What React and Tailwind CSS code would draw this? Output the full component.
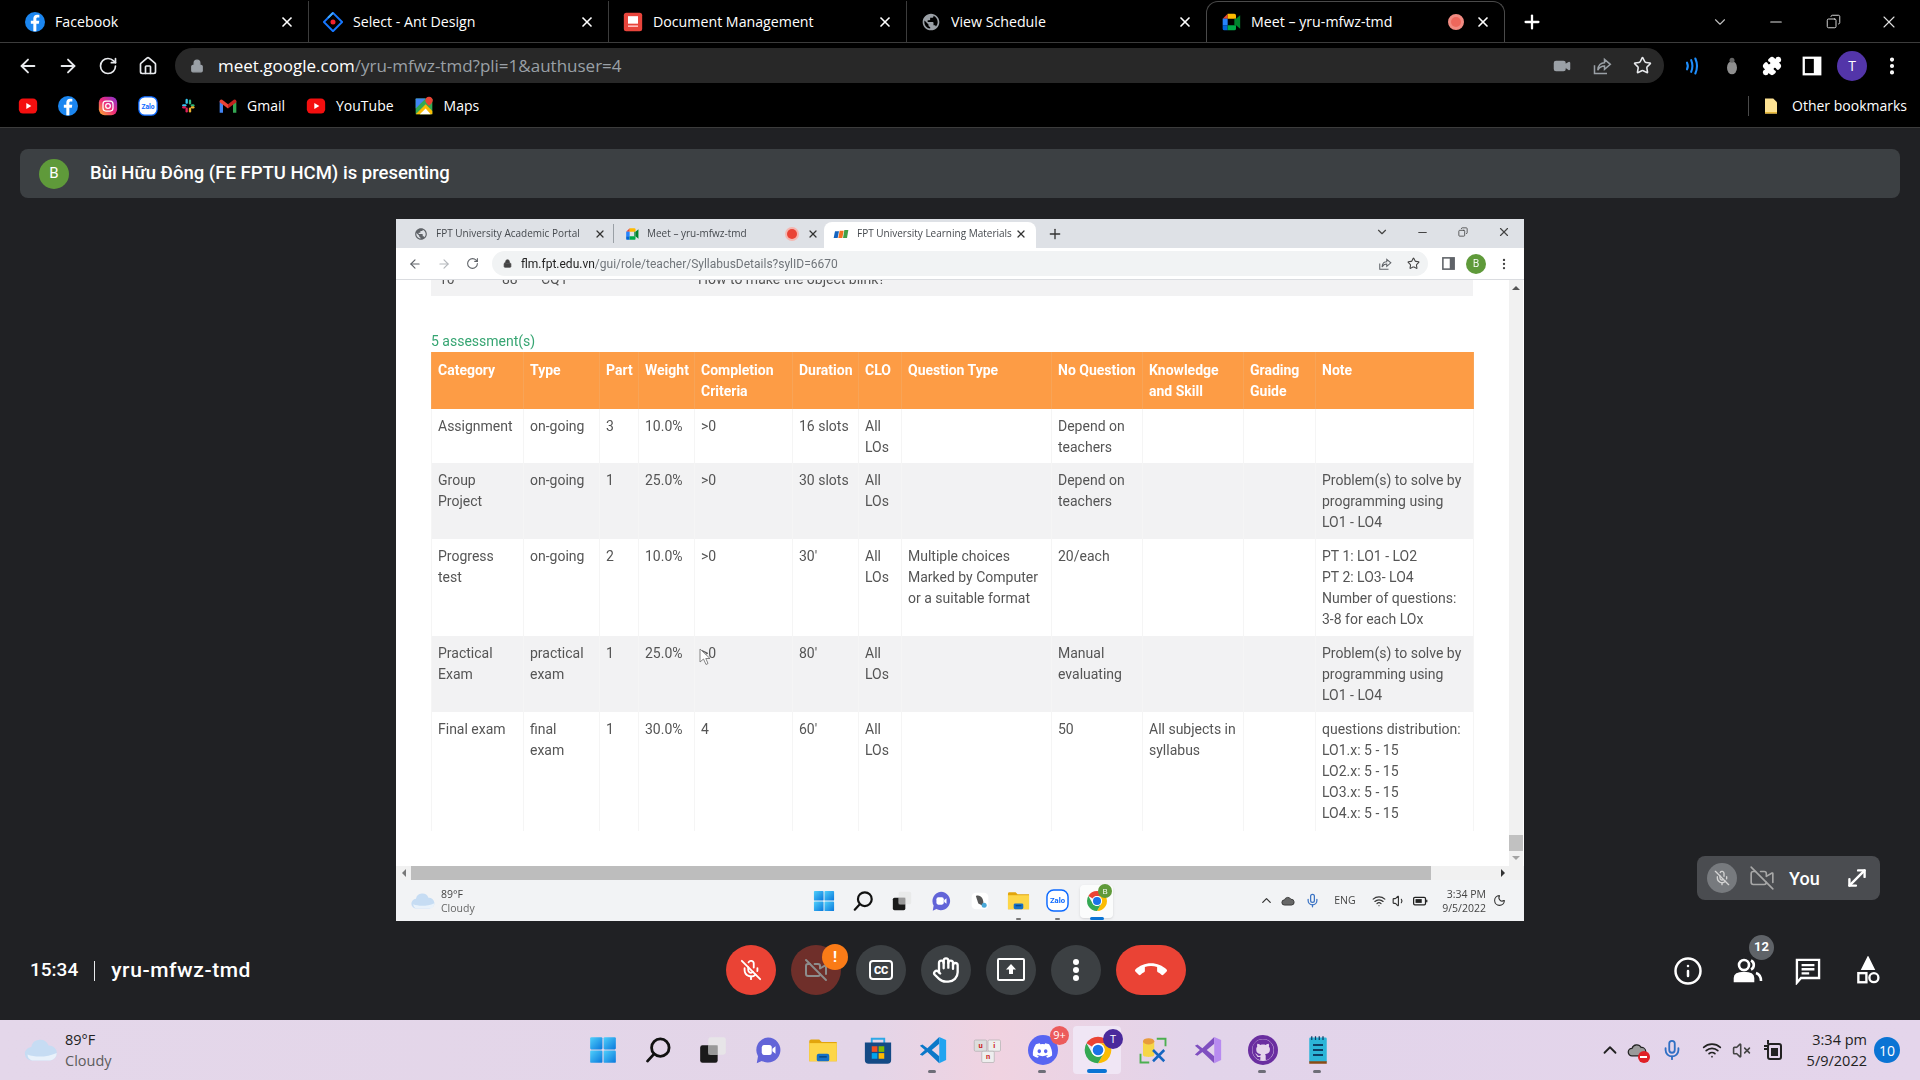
import React from 'react';
import {
  ArrowLeft, ArrowRight, RotateCw, House, Lock, Video, Star, Puzzle, X, Plus, ChevronDown, ChevronUp,
  Minus, Copy, MicOff, VideoOff, Hand, EllipsisVertical, Info, Mic, Wifi, VolumeX, Volume1, MoveDiagonal,
  Moon,
} from 'lucide-react';
import { FaDiscord, FaGithub } from 'react-icons/fa';

// --- logos and small drawings ---
const FbLogo = ({ size = 20 }) => (
  <svg width={size} height={size} viewBox="0 0 24 24">
    <circle cx="12" cy="12" r="12" fill="#1b86f0" />
    <path d="M13.6 23v-9h3l.5-3.5h-3.500V8.300c0-1 .4-1.700 1.800-1.700h1.800V3.500c-.4 0-1.400-.2-2.700-.2-2.700 0-4.500 1.600-4.500 4.600v2.600H7V14h3V23z" fill="#fff" />
  </svg>
);
const AntLogo = () => (
  <svg width="20" height="20" viewBox="0 0 24 24">
    <path d="M12 1 L23 12 L12 23 L1 12 Z" fill="none" stroke="#1677ff" strokeWidth="2.400" />
    <path d="M12 1 L6 7" stroke="#40a9ff" strokeWidth="2.400" />
    <circle cx="12" cy="12" r="3" fill="#f5222d" />
  </svg>
);
const DocLogo = () => (
  <svg width="20" height="20" viewBox="0 0 24 24">
    <rect x="1" y="1" width="22" height="22" rx="3" fill="#e8453c" />
    <rect x="6" y="5" width="12" height="9" fill="#fff" />
    <rect x="6" y="16" width="12" height="2" fill="#fbb" />
  </svg>
);
const GlobeFilled = ({ size = 20, color = '#9aa0a6' }) => (
  <svg width={size} height={size} viewBox="0 0 24 24" fill={color}>
    <path d="M12 2C6.480 2 2 6.480 2 12s4.480 10 10 10 10-4.480 10-10S17.520 2 12 2zm-1 17.930c-3.950-.49-7-3.850-7-7.930 0-.62.08-1.210.21-1.790L9 15v1c0 1.100.9 2 2 2v1.930zm6.900-2.540c-.26-.81-1-1.390-1.900-1.390h-1v-3c0-.55-.45-1-1-1H8v-2h2c.55 0 1-.45 1-1V7h2c1.100 0 2-.9 2-2v-.41c2.930 1.190 5 4.060 5 7.410 0 2.080-.8 3.970-2.100 5.390z" />
  </svg>
);
const MeetLogo = ({ size = 20 }) => (
  <svg width={size} height={size} viewBox="0 0 24 24">
    <path d="M2 8 L8 2 V8 Z" fill="#ea4335" />
    <path d="M2 8 H8 V16 H2 Z" fill="#2684fc" />
    <path d="M2 16 H8 V22 H4 A2 2 0 0 1 2 20 Z" fill="#0066da" />
    <path d="M8 2 H16 A2 2 0 0 1 18 4 V8 H8 Z" fill="#ffba00" />
    <path d="M8 16 H18 V20 A2 2 0 0 1 16 22 H8 Z" fill="#00ac47" />
    <path d="M18 8 L23 4 V20 L18 16 Z" fill="#00832d" />
    <path d="M16 8 H18 V16 H16 Z" fill="#00832d" />
  </svg>
);
const FptLogo = () => (
  <svg width="16" height="12" viewBox="0 0 24 16">
    <path d="M3 4 H9 L7 14 H1 Z" fill="#1565c0" />
    <path d="M10 3 H16 L14 14 H8 Z" fill="#f26f21" />
    <path d="M17 2 H23 L21 14 H15 Z" fill="#43a047" />
  </svg>
);
const YtLogo = () => (
  <svg width="20" height="20" viewBox="0 0 24 24">
    <rect x="1" y="3" width="22" height="18" rx="5" fill="#f40f0f" />
    <path d="M10 8.500 L16 12 L10 15.500 Z" fill="#fff" />
  </svg>
);
const InstaLogo = () => (
  <svg width="20" height="20" viewBox="0 0 24 24">
    <defs>
      <linearGradient id="insta" x1="0" y1="1" x2="1" y2="0">
        <stop offset="0" stopColor="#fdb32b" />
        <stop offset="0.5" stopColor="#ee2a7b" />
        <stop offset="1" stopColor="#8134d5" />
      </linearGradient>
    </defs>
    <rect x="1" y="1" width="22" height="22" rx="7" fill="url(#insta)" />
    <rect x="6" y="6" width="12" height="12" rx="3.500" fill="none" stroke="#fff" strokeWidth="1.500" />
    <circle cx="12" cy="12" r="2.800" fill="none" stroke="#fff" strokeWidth="1.500" />
  </svg>
);
const ZaloLogo = ({ size = 20 }) => (
  <svg width={size} height={size} viewBox="0 0 24 24">
    <rect x="1" y="1" width="22" height="22" rx="7" fill="#fff" stroke="#0a68ff" strokeWidth="1.500" />
    <text x="12" y="15" textAnchor="middle" fontSize="8" fontWeight="700" fill="#0a68ff" fontFamily="Roboto, sans-serif">Zalo</text>
  </svg>
);
const SlackLogo = () => (
  <svg width="16" height="18" viewBox="0 0 24 24" strokeWidth="3.500" strokeLinecap="round">
    <path d="M10 3 V7" stroke="#36c5f0" />
    <path d="M5 11 H8" stroke="#36c5f0" />
    <path d="M15 4 V8" stroke="#2eb67d" />
    <path d="M18 11 H20" stroke="#2eb67d" />
    <path d="M10 16 V20" stroke="#e01e5a" />
    <path d="M5 14 H7" stroke="#e01e5a" />
    <path d="M15 16 V20" stroke="#ecb22e" />
    <path d="M18 14 H20" stroke="#ecb22e" />
  </svg>
);
const GmailLogo = () => (
  <svg width="20" height="20" viewBox="0 0 24 24">
    <path d="M2 6 V20 H6 V10 Z" fill="#4285f4" />
    <path d="M22 6 V20 H18 V10 Z" fill="#34a853" />
    <path d="M2 6 A2 2 0 0 1 5 4.500 L12 10 L12 15 L2 7.500 Z" fill="#ea4335" />
    <path d="M22 6 A2 2 0 0 0 19 4.500 L12 10 L12 15 L22 7.500 Z" fill="#c5221f" />
  </svg>
);
const MapsLogo = () => (
  <svg width="20" height="20" viewBox="0 0 24 24">
    <rect x="2" y="3" width="20" height="19" rx="1" fill="#34a853" />
    <path d="M2 3 H14 L2 15 Z" fill="#4285f4" />
    <path d="M2 22 L14 10 L22 18 V22 Z" fill="#fbbc04" />
    <path d="M7 22 L14 15 L20 22 Z" fill="#fff" />
    <path d="M18 1 C15 1 13.500 3.500 13.500 5.500 C13.500 8 18 12 18 12 C18 12 22.500 8 22.500 5.500 C22.500 3.500 21 1 18 1 Z" fill="#ea4335" />
  </svg>
);
const ChromeLogo = ({ size = 24 }) => (
  <svg width={size} height={size} viewBox="0 0 24 24">
    <path d="M12 2 A10 10 0 0 1 20.660 7 H12 A5 5 0 0 0 7.670 9.500 L3.340 7 A10 10 0 0 1 12 2 Z" fill="#ea4335" />
    <path d="M20.660 7 A10 10 0 0 1 12 22 L16.330 14.500 A5 5 0 0 0 12 7 Z" fill="#fbbc04" />
    <path d="M3.340 7 L7.670 14.500 A5 5 0 0 0 16.330 14.500 L12 22 A10 10 0 0 1 3.340 7 Z" fill="#34a853" />
    <circle cx="12" cy="12" r="5" fill="#fff" />
    <circle cx="12" cy="12" r="4" fill="#1a73e8" />
  </svg>
);
const WinLogo = ({ size = 28 }) => (
  <svg width={size} height={size} viewBox="0 0 24 24">
    <defs>
      <linearGradient id="win" x1="0" y1="0" x2="1" y2="1">
        <stop offset="0" stopColor="#4fd0fb" />
        <stop offset="1" stopColor="#0a78dc" />
      </linearGradient>
    </defs>
    <rect x="1" y="1" width="10.500" height="10.500" rx="1" fill="url(#win)" />
    <rect x="12.500" y="1" width="10.500" height="10.500" rx="1" fill="url(#win)" />
    <rect x="1" y="12.500" width="10.500" height="10.500" rx="1" fill="url(#win)" />
    <rect x="12.500" y="12.500" width="10.500" height="10.500" rx="1" fill="url(#win)" />
  </svg>
);
const WinSearch = ({ size = 28 }) => (
  <svg width={size} height={size} viewBox="0 0 24 24" fill="none" stroke="#111" strokeWidth="2.400" strokeLinecap="round">
    <circle cx="14" cy="10" r="7.500" />
    <path d="M8.500 15.500 L3 21.500" />
  </svg>
);
const TaskView = ({ size = 28 }) => (
  <svg width={size} height={size} viewBox="0 0 24 24">
    <rect x="1" y="8" width="15" height="15" rx="2" fill="#1a1a1a" />
    <rect x="8" y="1" width="15" height="15" rx="2" fill="#e8e8e8" fillOpacity="0.85" />
    <rect x="8" y="8" width="8" height="8" fill="#999" />
  </svg>
);
const MeetChat = ({ size = 28 }) => (
  <svg width={size} height={size} viewBox="0 0 24 24">
    <path d="M12 2 A10 10 0 1 1 7 20.700 L3 22.500 L4 17 A10 10 0 0 1 12 2 Z" fill="#6264d8" />
    <rect x="7" y="8" width="8" height="8" rx="2" fill="#fff" />
    <path d="M15.500 11 L18 9 V15 L15.500 13 Z" fill="#fff" />
  </svg>
);
const FolderLogo = ({ size = 28 }) => (
  <svg width={size} height={size} viewBox="0 0 24 24">
    <path d="M1 5 A1.500 1.500 0 0 1 2.500 3.500 H9 L11 5.500 H23 V21 H1 Z" fill="#e2a50c" />
    <rect x="1" y="6.500" width="22" height="14.500" fill="#fdd648" />
    <rect x="7" y="15" width="10" height="6" rx="1.500" fill="#1570c6" />
    <rect x="9" y="17" width="6" height="1" fill="#063f73" />
  </svg>
);
const StoreLogo = ({ size = 28 }) => (
  <svg width={size} height={size} viewBox="0 0 24 24">
    <path d="M7 7 V3 H17 V7" fill="none" stroke="#2ea8e6" strokeWidth="1.500" />
    <path d="M1.500 6 H22.500 V20 A3 3 0 0 1 19.500 23 H4.500 A3 3 0 0 1 1.500 20 Z" fill="#144a85" />
    <rect x="7" y="9" width="4.500" height="4.500" fill="#f25022" />
    <rect x="12.500" y="9" width="4.500" height="4.500" fill="#7fba00" />
    <rect x="7" y="14.500" width="4.500" height="4.500" fill="#00a4ef" />
    <rect x="12.500" y="14.500" width="4.500" height="4.500" fill="#ffb900" />
  </svg>
);
const VsCodeLogo = ({ size = 30 }) => (
  <svg width={size} height={size} viewBox="0 0 24 24">
    <path d="M17 1.500 L7.500 10.500 3.500 7.500 1.500 8.500 5.500 12 1.500 15.500 3.500 16.500 7.500 13.500 17 22.500 V17 L11 12 L17 7 Z" fill="#0b78c9" />
    <path d="M17 1.500 L22.500 4 V20 L17 22.500 Z" fill="#20a4f0" />
  </svg>
);
const UniKeyLogo = ({ size = 30 }) => (
  <svg width={size} height={size} viewBox="0 0 24 24" fontSize="6" fontWeight="700" fontFamily="Roboto, sans-serif" textAnchor="middle">
    <rect x="1" y="4" width="10" height="9" rx="1" fill="#ddd" stroke="#aaa" strokeWidth="0.500" />
    <rect x="12" y="4" width="10" height="9" rx="1" fill="#eee" stroke="#aaa" strokeWidth="0.500" />
    <rect x="7" y="13" width="10" height="9" rx="1" fill="#eee" stroke="#aaa" strokeWidth="0.500" />
    <text x="6" y="10" fill="#c22">u</text>
    <text x="17" y="10" fill="#c22">i</text>
    <text x="12" y="19" fill="#c22">n</text>
  </svg>
);
const DiscordLogo = ({ size = 30 }) => (
  <span className="flex items-center justify-center rounded-full bg-[#5865f2]" style={{ width: size, height: size }}>
    <FaDiscord color="#fff" size={size * 0.7} />
  </span>
);
const SqlToolLogo = ({ size = 30 }) => (
  <svg width={size} height={size} viewBox="0 0 24 24">
    <path d="M15 3 H22 V9 M2 15 V22 H9" fill="none" stroke="#4caf50" strokeWidth="1.500" />
    <path d="M4 5 V16 C4 18 13 18 13 16 V5 Z" fill="#f6d648" />
    <ellipse cx="8.500" cy="5" rx="4.500" ry="2.500" fill="#e89b3c" />
    <path d="M12 12 L21 21 M21 12 L12 21" stroke="#1566c0" strokeWidth="2" />
  </svg>
);
const VsLogo = ({ size = 30 }) => (
  <svg width={size} height={size} viewBox="0 0 24 24">
    <path d="M17 1.500 L7.500 10.500 3.500 7.500 1.500 8.500 5.500 12 1.500 15.500 3.500 16.500 7.500 13.500 17 22.500 V17 L11 12 L17 7 Z" fill="#7f4fc0" />
    <path d="M17 1.500 L22.500 4 V20 L17 22.500 Z" fill="#b88bf0" />
  </svg>
);
const GithubLogo = ({ size = 30 }) => (
  <span className="flex items-center justify-center rounded-full bg-[#6a2ea0]" style={{ width: size, height: size }}>
    <span className="flex items-center justify-center rounded-full bg-[#e5d5ec]" style={{ width: size - 8, height: size - 8 }}>
      <FaGithub color="#6a2ea0" size={size - 8} />
    </span>
  </span>
);
const NotesLogo = ({ size = 30 }) => (
  <svg width={size} height={size} viewBox="0 0 24 24">
    <rect x="5" y="2" width="14" height="20" rx="1" fill="#2cb5d8" />
    <rect x="5" y="21" width="14" height="2" fill="#8a4b16" />
    <path d="M8 8 H16 M8 12 H16 M8 16 H16" stroke="#0d3f66" strokeWidth="1.500" />
    <path d="M7 1 V4 M10 1 V4 M13 1 V4 M16 1 V4" stroke="#0d3f66" strokeWidth="1" />
  </svg>
);
const ShareIcon = ({ size = 18, color }) => (
  <svg width={size} height={size} viewBox="0 0 24 24" fill="none" stroke={color} strokeWidth="1.800">
    <path d="M3 11 V21 H18" />
    <path d="M7 17 C7 11 11 8 15 8 V4 L22 10 L15 16 V12 C12 12 9 13 7 17 Z" />
  </svg>
);
const PanelIcon = ({ size = 20, side = '#fff', box = '#fff' }) => (
  <svg width={size} height={size} viewBox="0 0 24 24">
    <rect x="3" y="3" width="18" height="18" fill="none" stroke={box} strokeWidth="2.500" />
    <rect x="14" y="3" width="7" height="18" fill={side} />
  </svg>
);
const CloudIcon = ({ size = 32 }) => (
  <svg width={size} height={size} viewBox="0 0 24 24">
    <path d="M6 19 A4.500 4.500 0 0 1 5.500 10 A6 6 0 0 1 17 9 A5 5 0 0 1 18 19 Z" fill="#c6dcf3" />
    <path d="M6 19 A4.500 4.500 0 0 1 3 15 C8 17 16 17 22.500 14 A5 5 0 0 1 18 19 Z" fill="#e9f2fb" />
  </svg>
);
const CallEnd = () => (
  <svg width="32" height="32" viewBox="0 0 24 24" fill="#fff">
    <path d="M12 9c-1.600 0-3.150.25-4.600.72v3.100c0 .39-.23.74-.56.9-.98.49-1.870 1.120-2.660 1.850-.18.18-.43.28-.7.28-.28 0-.53-.11-.71-.29L.29 13.080c-.18-.17-.29-.42-.29-.7 0-.28.11-.53.29-.71C3.340 8.780 7.460 7 12 7s8.660 1.780 11.710 4.670c.18.18.29.43.29.71 0 .28-.11.53-.29.71l-2.480 2.480c-.18.18-.43.29-.71.29-.27 0-.52-.11-.7-.28-.79-.74-1.690-1.360-2.670-1.850-.33-.16-.56-.5-.56-.9v-3.100C15.150 9.250 13.600 9 12 9z" />
  </svg>
);

// --- outer browser ---
function Tab({ width, icon, title, rec, active, sep }) {
  return (
    <div className={`${width} ${active ? 'border border-b-0 border-[#4a4a4a] rounded-t-xl' : ''} ${sep ? 'border-r border-[#3c3c3c]' : ''} h-full flex items-center pl-[14px]`}>
      <span className="w-[20px] flex justify-center">{icon}</span>
      <span className="ml-[10px] flex-1 text-[14.200px] text-white truncate">{title}</span>
      {rec && (
        <span className="w-[16px] h-[16px] rounded-full bg-[#f28b82] border-[2px] border-[#f28b82] flex items-center justify-center mr-[11px]">
          <span className="w-[10px] h-[10px] rounded-full bg-[#ee675c]" />
        </span>
      )}
      <X size={16} color="#fff" strokeWidth={2.500} className="mr-[13px]" />
    </div>
  );
}

function Slot({ children, className = 'w-[40px]' }) {
  return <span className={`${className} shrink-0 flex items-center justify-center`}>{children}</span>;
}

function BrowserChrome() {
  return (
    <div className="bg-black font-['Open_Sans',sans-serif] shrink-0">
      <div className="h-[43px] flex items-stretch border-b border-[#3c3c3c] pt-[1px]">
        <div className="flex h-[41px] items-center">
          <Tab width="w-[309px] !pl-[25px]" icon={<FbLogo />} title="Facebook" sep />
          <Tab width="w-[300px]" icon={<AntLogo />} title="Select - Ant Design" sep />
          <Tab width="w-[298px]" icon={<DocLogo />} title="Document Management" sep />
          <Tab width="w-[299px]" icon={<GlobeFilled />} title="View Schedule" />
          <Tab width="w-[299px]" icon={<MeetLogo />} title="Meet – yru-mfwz-tmd" rec active />
        </div>
        <div className="flex items-center h-[41px]">
          <Plus size={22} color="#fff" strokeWidth={2.500} className="ml-[16px]" />
          <ChevronDown size={18} color="#bdbdbd" strokeWidth={1.500} className="ml-[168px]" />
          <Minus size={18} color="#e0e0e0" strokeWidth={1.500} className="ml-[38px]" />
          <Copy size={15} color="#e0e0e0" strokeWidth={1.500} className="ml-[41px] -scale-x-100" />
          <X size={20} color="#e0e0e0" strokeWidth={1.300} className="ml-[38px]" />
        </div>
      </div>

      <div className="h-[41px] pt-[5px] flex items-start pl-[8px]">
        <Slot className="w-[40px] h-[35px]"><ArrowLeft size={22} color="#e8eaed" /></Slot>
        <Slot className="w-[40px] h-[35px]"><ArrowRight size={22} color="#e8eaed" /></Slot>
        <Slot className="w-[40px] h-[35px]"><RotateCw size={20} color="#e8eaed" /></Slot>
        <Slot className="w-[40px] h-[35px]"><House size={20} color="#e8eaed" /></Slot>
        <div className="ml-[7px] w-[1489px] h-[35px] rounded-full bg-[#282828] flex items-center pl-[15px]">
          <Lock size={14} color="#9aa0a6" fill="#9aa0a6" />
          <span className="ml-[14px] text-[17px] text-white">
            meet.google.com<span className="text-[#9aa0a6]">/yru-mfwz-tmd?pli=1&amp;authuser=4</span>
          </span>
          <span className="ml-auto flex items-center pr-[2px]">
            <Slot><Video size={18} color="#9aa0a6" fill="#9aa0a6" /></Slot>
            <Slot><ShareIcon color="#9aa0a6" size={20} /></Slot>
            <Slot><Star size={19} color="#e8eaed" /></Slot>
          </span>
        </div>
        <div className="ml-[8px] flex items-center h-[35px]">
          <Slot>
            <svg width="20" height="20" viewBox="0 0 24 24" fill="none" stroke="#1e8fff" strokeWidth="2.500" strokeLinecap="round">
              <path d="M6 8 Q8 12 6 16 M11 5 Q14 12 11 19 M16 3 Q20 12 16 21" />
            </svg>
          </Slot>
          <Slot>
            <svg width="20" height="22" viewBox="0 0 24 24">
              <ellipse cx="12" cy="14" rx="6" ry="8" fill="#8f8f8f" />
              <circle cx="12" cy="5" r="3" fill="#666" />
            </svg>
          </Slot>
          <Slot><Puzzle size={20} color="#fff" fill="#fff" /></Slot>
          <Slot><PanelIcon size={22} /></Slot>
          <Slot>
            <span className="w-[30px] h-[30px] rounded-full bg-[#5335a9] flex items-center justify-center text-[14px] text-white">T</span>
          </Slot>
          <Slot><EllipsisVertical size={22} color="#fff" strokeWidth={2.500} /></Slot>
        </div>
      </div>

      <div className="h-[44px] border-b border-[#3c3c3c] flex items-center pl-[8px] text-[14px] text-white">
        <Slot><YtLogo /></Slot>
        <Slot><FbLogo /></Slot>
        <Slot><InstaLogo /></Slot>
        <Slot><ZaloLogo /></Slot>
        <Slot><SlackLogo /></Slot>
        <Slot><GmailLogo /></Slot>
        <span className="-ml-[1px] mr-[11px]">Gmail</span>
        <Slot><YtLogo /></Slot>
        <span className="mr-[10px]">YouTube</span>
        <Slot><MapsLogo /></Slot>
        <span>Maps</span>
        <div className="ml-auto flex items-center pr-[13px]">
          <span className="w-px h-[20px] bg-[#4a4a4a]" />
          <svg width="18" height="22" viewBox="0 0 24 24" className="ml-[13px] mr-[12px]">
            <path d="M4 2 H15 L20 7 V22 H4 Z" fill="#fde293" />
            <path d="M4 20 H20 V22 H4 Z" fill="#e8b93a" />
          </svg>
          <span>Other bookmarks</span>
        </div>
      </div>
    </div>
  );
}

// --- presented screen ---
const headers = ['Category', 'Type', 'Part', 'Weight', 'Completion Criteria', 'Duration', 'CLO', 'Question Type', 'No Question', 'Knowledge and Skill', 'Grading Guide', 'Note'];
const colClasses = ['w-[92px]', 'w-[76px]', 'w-[39px]', 'w-[56px]', 'w-[98px]', 'w-[66px]', 'w-[43px]', 'w-[150px]', 'w-[91px]', 'w-[101px]', 'w-[72px]', 'w-[158px]'];
const rows = [
  { h: 'h-[54px]', cells: ['Assignment', 'on-going', '3', '10.0%', '>0', '16 slots', 'All LOs', '', 'Depend on teachers', '', '', ''] },
  { h: 'h-[76px]', cells: ['Group Project', 'on-going', '1', '25.0%', '>0', '30 slots', 'All LOs', '', 'Depend on teachers', '', '', 'Problem(s) to solve by\nprogramming using\nLO1 - LO4'] },
  { h: 'h-[97px]', cells: ['Progress test', 'on-going', '2', '10.0%', '>0', "30'", 'All LOs', 'Multiple choices\nMarked by Computer\nor a suitable format', '20/each', '', '', 'PT 1: LO1 - LO2\nPT 2: LO3- LO4\nNumber of questions:\n3-8 for each LOx'] },
  { h: 'h-[76px]', cells: ['Practical Exam', 'practical\nexam', '1', '25.0%', '>0', "80'", 'All LOs', '', 'Manual evaluating', '', '', 'Problem(s) to solve by\nprogramming using\nLO1 - LO4'] },
  { h: 'h-[119px]', cells: ['Final exam', 'final\nexam', '1', '30.0%', '4', "60'", 'All LOs', '', '50', 'All subjects in syllabus', '', 'questions distribution:\nLO1.x: 5 - 15\nLO2.x: 5 - 15\nLO3.x: 5 - 15\nLO4.x: 5 - 15'] },
];

function AssessmentTable() {
  return (
    <table className="table-fixed w-[1042px] border-collapse text-[14px] leading-[21px] text-[#555]">
      <colgroup>
        {colClasses.map((c) => <col key={c} className={c} />)}
      </colgroup>
      <thead>
        <tr className="h-[57px] bg-[#fd9c45]">
          {headers.map((h) => (
            <th key={h} className="align-top text-left font-bold text-white pl-[6px] pr-[2px] pt-[8px] border-x border-[#f8a457]">{h}</th>
          ))}
        </tr>
      </thead>
      <tbody>
        {rows.map((row, i) => (
          <tr key={i} className={`${row.h} ${i % 2 === 1 ? 'bg-[#f2f2f3]' : 'bg-white'}`}>
            {row.cells.map((c, j) => (
              <td key={j} className="relative align-top pl-[6px] pr-[2px] pt-[7px] border-x border-[#f5f5f5] whitespace-pre-line">
                {c}
                {i === 3 && j === 4 && (
                  <svg width="14" height="18" viewBox="0 0 14 18" className="absolute left-[4px] top-[12px]">
                    <path d="M1 1 V14 L4.500 11 L7 16.500 L9 15.500 L6.800 10.500 H11 Z" fill="#fff" stroke="#777" strokeWidth="0.900" />
                  </svg>
                )}
              </td>
            ))}
          </tr>
        ))}
      </tbody>
    </table>
  );
}

function InnerChrome() {
  return (
    <div className="shrink-0 font-['Open_Sans',sans-serif]">
      <div className="h-[29px] bg-[#dee1e6] flex items-center text-[10px] text-[#45494e]">
        <div className="w-[218px] h-full flex items-center pl-[18px] border-r-0">
          <GlobeFilled size={14} color="#5f6368" />
          <span className="ml-[8px] flex-1 truncate">FPT University Academic Portal</span>
          <X size={12} color="#333" strokeWidth={2.500} className="mr-[7px]" />
          <span className="w-px h-[19px] bg-[#9aa0a6]" />
        </div>
        <div className="w-[210px] h-full flex items-center pl-[11px]">
          <MeetLogo size={14} />
          <span className="ml-[8px] flex-1 truncate">Meet – yru-mfwz-tmd</span>
          <span className="w-[10px] h-[10px] rounded-full bg-[#ea4335] ring-2 ring-[#f5b7b1] mr-[10px]" />
          <X size={12} color="#333" strokeWidth={2.500} className="mr-[5px]" />
        </div>
        <div className="w-[212px] h-[26px] mt-[3px] pb-[3px] rounded-t-lg bg-white flex items-center pl-[9px]">
          <FptLogo />
          <span className="ml-[8px] flex-1 truncate">FPT University Learning Materials</span>
          <X size={12} color="#333" strokeWidth={2.500} className="mr-[9px]" />
        </div>
        <Plus size={16} color="#333" className="ml-[11px]" />
        <ChevronDown size={14} color="#444" className="ml-[312px] -mt-[3px]" />
        <Minus size={13} color="#444" className="ml-[27px] -mt-[3px]" />
        <Copy size={10} color="#444" className="ml-[29px] -mt-[3px] -scale-x-100" />
        <X size={14} color="#444" className="ml-[29px] -mt-[3px]" />
      </div>
      <div className="h-[32px] bg-white border-b border-[#dadce0] flex items-center pl-[9px]">
        <Slot className="w-[20px]"><ArrowLeft size={14} color="#5f6368" /></Slot>
        <Slot className="w-[38px]"><ArrowRight size={14} color="#b4b7bb" /></Slot>
        <Slot className="w-[18px]"><RotateCw size={13} color="#5f6368" /></Slot>
        <div className="ml-[11px] w-[936px] h-[25px] rounded-full bg-[#f1f3f4] flex items-center pl-[11px] text-[12px] text-[#222] font-[Roboto,sans-serif]">
          <Lock size={9} color="#444" fill="#444" />
          <span className="ml-[9px]">flm.fpt.edu.vn<span className="text-[#70757a]">/gui/role/teacher/SyllabusDetails?sylID=6670</span></span>
          <span className="ml-auto flex items-center">
            <Slot className="w-[29px]"><ShareIcon size={14} color="#5f6368" /></Slot>
            <Slot className="w-[29px]"><Star size={13} color="#444" /></Slot>
          </span>
        </div>
        <Slot className="w-[28px] ml-[6px]"><PanelIcon size={15} side="#5f6368" box="#5f6368" /></Slot>
        <Slot className="w-[28px]">
          <span className="w-[20px] h-[20px] rounded-full bg-[#5f9a3a] text-white text-[10px] flex items-center justify-center">B</span>
        </Slot>
        <Slot className="w-[28px]"><EllipsisVertical size={14} color="#444" /></Slot>
      </div>
    </div>
  );
}

function InnerTaskbar() {
  return (
    <div className="h-[41px] shrink-0 bg-[#f2f3f5] grid grid-cols-[1fr_auto_1fr] items-center font-['Open_Sans',sans-serif] text-[#444]">
      <div className="flex items-center pl-[14px]">
        <CloudIcon size={26} />
        <div className="ml-[5px] text-[10.500px] leading-[14px]">
          <div>89°F</div>
          <div className="text-[#666]">Cloudy</div>
        </div>
      </div>
      <div className="flex items-center">
        <Slot className="w-[39px]"><WinLogo size={22} /></Slot>
        <Slot className="w-[39px]"><WinSearch size={22} /></Slot>
        <Slot className="w-[39px]"><TaskView size={20} /></Slot>
        <Slot className="w-[39px]"><MeetChat size={22} /></Slot>
        <Slot className="w-[39px]">
          <svg width="20" height="20" viewBox="0 0 24 24"><rect x="2" y="2" width="20" height="20" rx="5" fill="#fff" /><path d="M7 6 C12 4 17 8 16 18 L10 15 Z" fill="#555" /><circle cx="17" cy="17" r="3" fill="#4aa8d8" /></svg>
        </Slot>
        <Slot className="relative w-[39px]"><FolderLogo size={23} /><Dot /></Slot>
        <Slot className="relative w-[39px]"><ZaloLogo size={23} /><Dot /></Slot>
        <Slot className="relative w-[39px]">
          <span className="absolute left-[3px] top-[-4px] w-[33px] h-[33px] rounded bg-white/70 shadow-sm" />
          <span className="relative"><ChromeLogo size={24} /></span>
          <span className="absolute left-[21px] top-[-5px] w-[14px] h-[14px] rounded-full bg-[#5f9a3a] text-white text-[8px] flex items-center justify-center">B</span>
          <span className="absolute left-[13px] bottom-[-7px] w-[14px] h-[3px] rounded bg-[#0a74d4]" />
        </Slot>
      </div>
      <div className="flex items-center justify-end pr-[18px]">
        <ChevronUp size={15} color="#333" />
        <svg width="16" height="14" viewBox="0 0 24 24" className="ml-[6px]"><path d="M6 19 A4.500 4.500 0 0 1 6 10 A6 6 0 0 1 17 9 A5 5 0 0 1 18 19 Z" fill="#666" stroke="#333" strokeWidth="1.500" /></svg>
        <Mic size={15} color="#3b73c4" className="ml-[9px]" />
        <span className="ml-[14px] text-[10.500px] w-[22px]">ENG</span>
        <Wifi size={14} color="#333" className="ml-[16px]" />
        <Volume1 size={14} color="#333" className="ml-[6px]" />
        <svg width="15" height="12" viewBox="0 0 24 16" className="ml-[7px]"><rect x="1" y="2" width="19" height="12" rx="2" fill="none" stroke="#222" strokeWidth="2" /><rect x="4" y="5" width="10" height="6" fill="#222" /><rect x="21" y="6" width="2" height="4" fill="#222" /></svg>
        <div className="ml-[14px] text-right text-[10.500px] leading-[14px]">
          <div>3:34 PM</div>
          <div>9/5/2022</div>
        </div>
        <Moon size={13} color="#333" className="ml-[7px]" />
      </div>
    </div>
  );
}

const Dot = () => <span className="absolute left-[17px] bottom-[-8px] w-[5px] h-[2px] rounded bg-[#777]" />;

function PresentedScreen() {
  return (
    <div className="w-[1128px] h-[702px] mx-auto mt-[21px] shrink-0 bg-white flex flex-col overflow-hidden blur-[0.4px]">
      <InnerChrome />
      <div className="flex-1 flex min-h-0 font-[Roboto,sans-serif]">
        <div className="w-[1113px] pl-[35px] overflow-hidden">
          <div className="w-[1042px] h-[16px] bg-[#f2f2f3] overflow-hidden relative text-[14px] text-[#555] leading-[21px]">
            <div className="flex -mt-[11px]">
              <span className="w-[71px] pl-[8px]">10</span>
              <span className="w-[39px]">88</span>
              <span className="w-[157px]">CQ1</span>
              <span>How to make the object blink?</span>
            </div>
          </div>
          <div className="mt-[35px] h-[21px] text-[14px] leading-[21px] text-[#36a572]">5 assessment(s)</div>
          <AssessmentTable />
        </div>
        <div className="w-[14px] bg-[#f1f1f1] flex flex-col items-center pt-[6px] text-[#555]">
          <span className="w-0 h-0 border-x-[4px] border-x-transparent border-b-[4px] border-b-[#555]" />
          <span className="mt-auto w-full h-[16px] bg-[#c1c1c1]" />
          <span className="mt-[5px] mb-[6px] w-0 h-0 border-x-[4px] border-x-transparent border-t-[4px] border-t-[#a3a3a3]" />
        </div>
      </div>
      <div className="h-[14px] shrink-0 flex items-center bg-[#f1f1f1]">
        <span className="w-[15px] flex justify-center">
          <span className="w-0 h-0 border-y-[4px] border-y-transparent border-r-[4px] border-r-[#777]" />
        </span>
        <span className="w-[1020px] h-full bg-[#bdbdbd]" />
        <span className="ml-[66px] w-[12px] flex justify-center">
          <span className="w-0 h-0 border-y-[4px] border-y-transparent border-l-[4px] border-l-[#333]" />
        </span>
      </div>
      <InnerTaskbar />
    </div>
  );
}

// --- meet controls ---
function RoundBtn({ className = 'w-[50px] bg-[#3c4043]', children }) {
  return <button className={`relative h-[50px] rounded-full flex items-center justify-center ${className}`}>{children}</button>;
}

function MeetBar() {
  return (
    <div className="h-[98px] shrink-0 grid grid-cols-[726px_auto_1fr] items-center text-white font-[Roboto,sans-serif]">
      <div className="flex items-center pl-[30px] pt-[1px] font-medium">
        <span className="text-[19px]">15:34</span>
        <span className="w-px h-[20px] bg-[#e8eaed] mx-[16px]" />
        <span className="text-[21px] tracking-[0.6px]">yru-mfwz-tmd</span>
      </div>
      <div className="flex items-center gap-[15px]">
        <RoundBtn className="w-[50px] bg-[#ea4335]"><MicOff size={22} color="#fff" /></RoundBtn>
        <RoundBtn className="w-[50px] bg-[#6f2f2a]">
          <VideoOff size={24} color="#8d8d8d" />
          <span className="absolute right-[-7px] top-[-1px] w-[26px] h-[26px] rounded-full bg-[#fa7b17] flex items-center justify-center text-[15px] font-bold">!</span>
        </RoundBtn>
        <RoundBtn>
          <span className="w-[24px] h-[20px] border-2 border-white rounded-sm flex items-center justify-center text-[11px] font-black leading-none tracking-tight">CC</span>
        </RoundBtn>
        <RoundBtn><Hand size={28} color="#fff" /></RoundBtn>
        <RoundBtn>
          <svg width="30" height="26" viewBox="0 0 30 26">
            <rect x="2" y="2" width="26" height="21" rx="1" fill="none" stroke="#fff" strokeWidth="2" />
            <path d="M15 7 L20 12.500 H17 V17 H13 V12.500 H10 Z" fill="#fff" />
          </svg>
        </RoundBtn>
        <RoundBtn>
          <svg width="8" height="24" viewBox="0 0 8 24" fill="#fff"><circle cx="4" cy="4" r="3" /><circle cx="4" cy="12" r="3" /><circle cx="4" cy="20" r="3" /></svg>
        </RoundBtn>
        <RoundBtn className="w-[70px] bg-[#ea4335]"><CallEnd /></RoundBtn>
      </div>
      <div className="flex items-center justify-end pr-[37px] pt-[1px] gap-[30px]">
        <Slot className="w-[30px]"><Info size={30} color="#fff" strokeWidth={2} /></Slot>
        <Slot className="relative w-[30px]">
          <svg width="30" height="26" viewBox="0 0 30 26" fill="none" stroke="#fff" strokeWidth="2.600">
            <circle cx="11" cy="7" r="5" />
            <path d="M2 23 V20 C2 16 7 15 11 15 C15 15 20 16 20 20 V23 Z" fill="#fff" />
            <path d="M18 2.500 A5 5 0 0 1 18 11.500 M23 15 C26 16 28 18 28 23" />
          </svg>
          <span className="absolute left-[16px] top-[-23px] w-[25px] h-[25px] rounded-full bg-[#5f6368] text-[13px] font-bold flex items-center justify-center">12</span>
        </Slot>
        <Slot className="w-[30px]">
          <svg width="28" height="28" viewBox="0 0 24 24" fill="none" stroke="#fff" strokeWidth="2">
            <path d="M2.500 2.500 H21.500 V18 H6 L2.500 22 Z" />
            <path d="M6.500 7 H17.500 M6.500 10.500 H17.500 M6.500 14 H13" />
          </svg>
        </Slot>
        <Slot className="w-[30px]">
          <svg width="26" height="30" viewBox="0 0 24 28" fill="none" stroke="#fff" strokeWidth="2.200">
            <path d="M12 2 L17 12 H7 Z" fill="#fff" />
            <rect x="3" y="16" width="7.500" height="8.500" />
            <circle cx="17.500" cy="20.200" r="4.200" />
          </svg>
        </Slot>
      </div>
    </div>
  );
}

function SelfTile() {
  return (
    <div className="absolute right-[40px] bottom-[180px] w-[183px] h-[44px] rounded-lg bg-[#4a4c50] flex items-center pl-[10px] text-white font-[Roboto,sans-serif]">
      <span className="w-[30px] h-[30px] rounded-full bg-[#777a7e] flex items-center justify-center"><MicOff size={16} color="#d4d4d4" /></span>
      <VideoOff size={26} color="#a8a8a8" strokeWidth={1.500} className="ml-[12px]" />
      <span className="ml-[14px] text-[18px] font-medium">You</span>
      <MoveDiagonal size={26} color="#fff" strokeWidth={2.200} className="ml-[24px]" />
    </div>
  );
}

// --- windows taskbar ---
function TaskIcon({ children, dot }) {
  return (
    <span className="relative w-[55px] h-[48px] flex items-center justify-center">
      {children}
      {dot && <span className="absolute bottom-[1px] left-[23px] w-[8px] h-[3px] rounded bg-[#6e6e78]" />}
    </span>
  );
}

function Taskbar() {
  return (
    <div className="h-[60px] shrink-0 grid grid-cols-[1fr_auto_1fr] items-center bg-[linear-gradient(90deg,#e4d7ea_0%,#e3d5e8_45%,#f0d3e1_52%,#e2d4ea_62%,#e4d5eb_100%)] font-['Open_Sans',sans-serif] text-[#222]">
      <div className="flex items-center pl-[23px]">
        <CloudIcon size={36} />
        <div className="ml-[6px] text-[14.500px] leading-[21px]">
          <div>89°F</div>
          <div className="text-[#5c5c5c]">Cloudy</div>
        </div>
      </div>
      <div className="flex items-center">
        <TaskIcon><WinLogo /></TaskIcon>
        <TaskIcon><WinSearch /></TaskIcon>
        <TaskIcon><TaskView /></TaskIcon>
        <TaskIcon><MeetChat size={30} /></TaskIcon>
        <TaskIcon><FolderLogo size={30} /></TaskIcon>
        <TaskIcon><StoreLogo size={30} /></TaskIcon>
        <TaskIcon dot><VsCodeLogo /></TaskIcon>
        <TaskIcon><UniKeyLogo /></TaskIcon>
        <TaskIcon dot>
          <DiscordLogo />
          <span className="absolute right-[1px] top-[0px] w-[19px] h-[19px] rounded-full bg-[#ec5b5b] text-white text-[11px] flex items-center justify-center">9+</span>
        </TaskIcon>
        <span className="relative w-[55px] h-[48px] flex items-center justify-center">
          <span className="absolute left-[3px] inset-y-0 w-[48px] rounded bg-[#f0e6f5]" />
          <span className="relative"><ChromeLogo size={32} /></span>
          <span className="absolute right-[2px] top-[3px] w-[20px] h-[20px] rounded-full bg-[#4a2a9c] text-white text-[11px] flex items-center justify-center">T</span>
          <span className="absolute bottom-[1px] left-[17px] w-[20px] h-[4px] rounded bg-[#0a74d4]" />
        </span>
        <TaskIcon><SqlToolLogo /></TaskIcon>
        <TaskIcon><VsLogo /></TaskIcon>
        <TaskIcon dot><GithubLogo /></TaskIcon>
        <TaskIcon dot><NotesLogo /></TaskIcon>
      </div>
      <div className="flex items-center justify-end pr-[20px]">
        <ChevronUp size={22} color="#222" />
        <span className="relative ml-[5px]">
          <svg width="22" height="20" viewBox="0 0 24 24"><path d="M6 19 A4.500 4.500 0 0 1 6 10 A6 6 0 0 1 17 9 A5 5 0 0 1 18 19 Z" fill="#9a9a9a" stroke="#222" strokeWidth="1.500" /></svg>
          <span className="absolute right-[-2px] bottom-[-3px] w-[12px] h-[12px] rounded-full bg-[#e01f26] flex items-center justify-center"><span className="w-[7px] h-[2px] bg-white" /></span>
        </span>
        <Mic size={22} color="#2f6fc4" className="ml-[13px]" />
        <Wifi size={20} color="#222" className="ml-[19px]" />
        <VolumeX size={19} color="#444" className="ml-[10px]" />
        <svg width="20" height="22" viewBox="0 0 20 22" className="ml-[12px]">
          <rect x="5" y="5" width="13" height="15" rx="2" fill="none" stroke="#222" strokeWidth="2" />
          <rect x="8" y="9" width="7" height="8" fill="#222" />
          <path d="M5 1 V5 M1 7 H5 M1 10 H5" stroke="#222" strokeWidth="2" />
        </svg>
        <div className="ml-[24px] text-right text-[14.500px] leading-[21px]">
          <div>3:34 pm</div>
          <div>5/9/2022</div>
        </div>
        <span className="ml-[7px] w-[26px] h-[26px] rounded-full bg-[#0a74d4] text-white text-[14px] flex items-center justify-center">10</span>
      </div>
    </div>
  );
}

export default function App() {
  return (
    <div className="relative w-[1920px] h-[1080px] flex flex-col overflow-hidden bg-[#202124]">
      <BrowserChrome />
      <div className="flex-1 flex flex-col min-h-0 pt-[21px]">
        <div className="mx-[20px] h-[49px] shrink-0 rounded-lg bg-[#3c4043] flex items-center pl-[19px] font-[Roboto,sans-serif]">
          <span className="w-[30px] h-[30px] rounded-full bg-[#5f9a3a] text-white text-[15px] flex items-center justify-center">B</span>
          <span className="ml-[21px] mt-[1px] text-[18.500px] font-medium text-white">Bùi Hữu Đông (FE FPTU HCM) is presenting</span>
        </div>
        <PresentedScreen />
        <MeetBar />
      </div>
      <SelfTile />
      <Taskbar />
    </div>
  );
}
